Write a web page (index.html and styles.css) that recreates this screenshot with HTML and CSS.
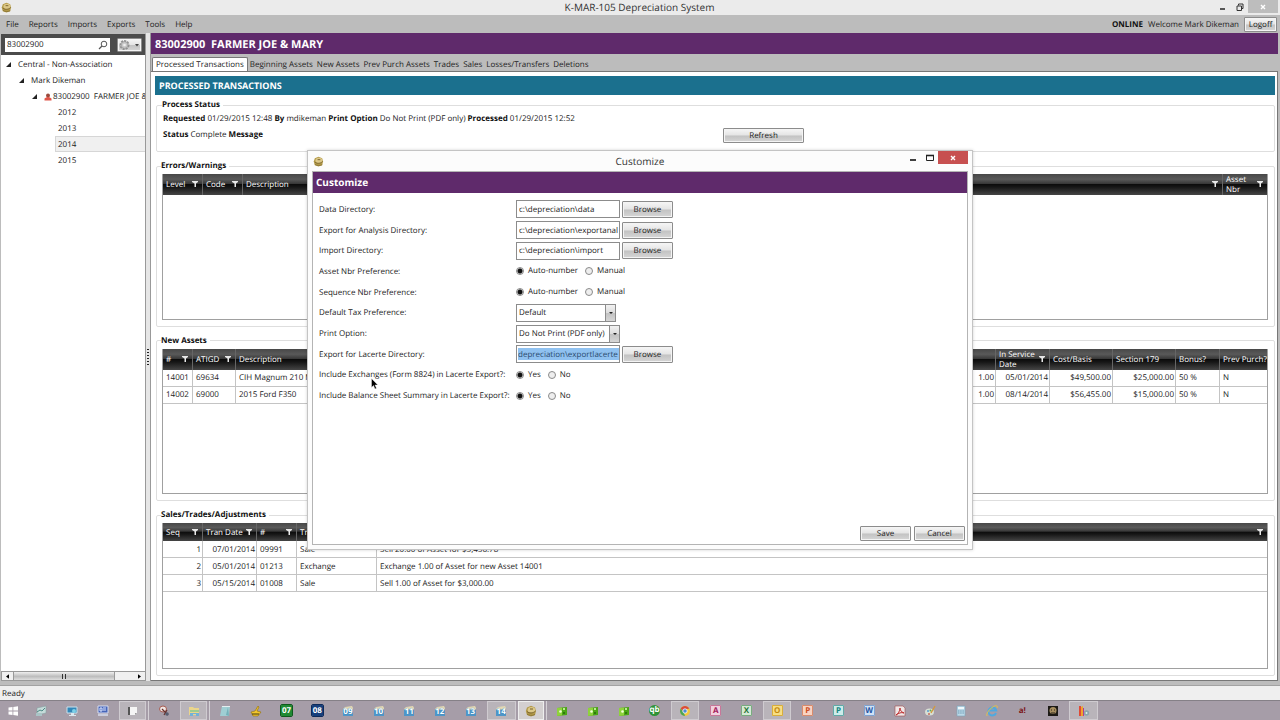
FILE: index.html
```html
<!DOCTYPE html>
<html lang="en">
<head>
<meta charset="utf-8">
<title>K-MAR-105 Depreciation System</title>
<link rel="stylesheet" href="styles.css">
</head>
<body>
<svg class="defs" aria-hidden="true">
  <symbol id="coin" viewBox="0 0 12 12"><path d="M2 2.500 6 .8l4 1.700 1 3.500-1 4-4 1.500-4-1.500L.8 6z" fill="#b39a48"/><ellipse cx="6.500" cy="5" rx="3.800" ry="3" fill="#dcc888"/><path d="M2 6.500c2 2 6 2 8.500-.5M5 4h3" stroke="#76602a" fill="none"/><path d="M2 9c2 1.500 5 2 8 .5" stroke="#8c7638" fill="none"/></symbol>
  <symbol id="funnel" viewBox="0 0 6 6"><path d="M0 0h6v1L4 2.500V6H2.500V2.500L0 1z" fill="#e8e8e8"/></symbol>
  <symbol id="folder" viewBox="0 0 12 12"><path d="M1 4 3 2l7-1 1 2v3H1z" fill="#e3d9b4"/><path d="M1 4.500h10V11H1z" fill="#4f96c8"/></symbol>
  <symbol id="green" viewBox="0 0 12 12"><path d="M1 3l10-1v8l-10 1z" fill="#4ba614"/><path d="M1 3l5-.5v8L1 11z" fill="#8fd23c"/><circle cx="4.500" cy="6.500" r="1.300" fill="#f1ffd8"/><circle cx="8" cy="4" r="1" fill="#e4ffb8"/><circle cx="8" cy="8" r="1" fill="#276b08"/></symbol>
</svg>

<header class="titlebar">
  <svg class="app-icon" viewBox="0 0 12 12"><use href="#coin"/></svg>
  <h1 class="window-title">K-MAR-105 Depreciation System</h1>
  <div class="window-buttons">
    <button class="win-btn" aria-label="Minimize"><svg viewBox="0 0 8 8"><path d="M1 6h5" stroke="#333" stroke-width="1.600"/></svg></button>
    <button class="win-btn" aria-label="Restore"><svg viewBox="0 0 8 8"><path d="M2.500 2.500V1H7v4.500H5.500M1 3h4.500v4.500H1z" stroke="#333" fill="none"/></svg></button>
    <button class="win-btn win-close" aria-label="Close"><svg viewBox="0 0 8 8"><path d="M2 2l4 4M6 2 2 6" stroke="#fff" stroke-width="1.400"/></svg></button>
  </div>
</header>

<nav class="menubar">
  <button class="menu">File</button><button class="menu">Reports</button><button class="menu">Imports</button><button class="menu">Exports</button><button class="menu">Tools</button><button class="menu">Help</button>
  <span class="session"><b>ONLINE</b><span>Welcome Mark Dikeman</span><button class="btn logoff">Logoff</button></span>
</nav>

<main class="workspace">
  <aside class="sidebar">
    <div class="finder">
      <label class="search"><input class="search-input" type="text" value="83002900" aria-label="Search"><svg viewBox="0 0 10 10"><circle cx="6" cy="4" r="2.800" fill="none" stroke="#555"/><path d="M4 6 1 9" stroke="#555" stroke-width="1.300"/></svg></label>
      <button class="btn gear" aria-label="Options"><svg viewBox="0 0 22 12"><circle cx="6.500" cy="6" r="4" fill="#c4c4c4" stroke="#909090" stroke-width="2" stroke-dasharray="2 1"/><circle cx="6.500" cy="6" r="3.300" fill="#c8c8c8" stroke="#999" stroke-width=".6"/><circle cx="6.500" cy="6" r="1.300" fill="#eee"/><path d="M17 5h4l-2 2.500z" fill="#444"/></svg></button>
    </div>
    <ul class="tree">
      <li><span class="node"><i class="caret"></i>Central - Non-Association</span>
        <ul>
          <li><span class="node"><i class="caret"></i>Mark Dikeman</span>
            <ul>
              <li><span class="node"><i class="caret"></i><svg class="person" viewBox="0 0 8 8"><circle cx="4" cy="2.500" r="2" fill="#9b4a3c"/><path d="M.5 7.500V5.500L3 4h2l2.500 1.500v2z" fill="#e0564a"/></svg>83002900&nbsp; FARMER JOE &amp; MARY</span>
                <ul class="years">
                  <li class="node">2012</li><li class="node">2013</li><li class="node selected">2014</li><li class="node">2015</li>
                </ul>
              </li>
            </ul>
          </li>
        </ul>
      </li>
    </ul>
    <div class="scrollbar">
      <button aria-label="Scroll left"><svg viewBox="0 0 4 6"><path d="M4 0v6L0 3z"/></svg></button>
      <div class="thumb"><i></i><i></i></div>
      <button class="end" aria-label="Scroll right"><svg viewBox="0 0 4 6"><path d="M0 0v6l4-3z"/></svg></button>
    </div>
  </aside>
  <div class="splitter"><span class="grip"></span></div>

  <section class="content">
    <h2 class="client">83002900&nbsp; FARMER JOE &amp; MARY</h2>
    <div class="tabs">
      <button class="tab active">Processed Transactions</button><button class="tab">Beginning Assets</button><button class="tab">New Assets</button><button class="tab">Prev Purch Assets</button><button class="tab">Trades</button><button class="tab">Sales</button><button class="tab">Losses/Transfers</button><button class="tab">Deletions</button>
    </div>
    <div class="panel">
      <h3 class="section-title">PROCESSED TRANSACTIONS</h3>

      <fieldset class="group status">
        <legend>Process Status</legend>
        <p><b>Requested</b> 01/29/2015 12:48 <b>By</b> mdikeman <b>Print Option</b> Do Not Print (PDF only) <b>Processed</b> 01/29/2015 12:52</p>
        <div class="status-row"><p><b>Status</b> Complete <b>Message</b></p><button class="btn">Refresh</button></div>
      </fieldset>

      <fieldset class="group fill">
        <legend>Errors/Warnings</legend>
        <div class="grid">
          <table class="tall">
            <colgroup><col class="c40"><col class="c40"><col><col class="c44"></colgroup>
            <thead><tr>
              <th><span>Level<svg><use href="#funnel"/></svg></span></th>
              <th><span>Code<svg><use href="#funnel"/></svg></span></th>
              <th><span>Description<svg><use href="#funnel"/></svg></span></th>
              <th><span>Asset<br>Nbr<svg><use href="#funnel"/></svg></span></th>
            </tr></thead>
          </table>
        </div>
      </fieldset>

      <fieldset class="group fill">
        <legend>New Assets</legend>
        <div class="grid">
          <table class="tall">
            <colgroup><col class="c30"><col class="c43"><col><col class="c80"><col class="c54"><col class="c63"><col class="c63"><col class="c44"><col class="c47"></colgroup>
            <thead><tr>
              <th><span>#<svg><use href="#funnel"/></svg></span></th>
              <th><span>ATIGD<svg><use href="#funnel"/></svg></span></th>
              <th><span>Description</span></th>
              <th><span>Quantity</span></th>
              <th><span>In Service<br>Date<svg><use href="#funnel"/></svg></span></th>
              <th><span>Cost/Basis</span></th>
              <th><span>Section 179</span></th>
              <th><span>Bonus?</span></th>
              <th><span>Prev Purch?</span></th>
            </tr></thead>
            <tbody>
              <tr><td>14001</td><td>69634</td><td>CIH Magnum 210 MFD</td><td class="num">1.00</td><td class="num">05/01/2014</td><td class="num">$49,500.00</td><td class="num">$25,000.00</td><td>50 %</td><td>N</td></tr>
              <tr><td>14002</td><td>69000</td><td>2015 Ford F350</td><td class="num">1.00</td><td class="num">08/14/2014</td><td class="num">$56,455.00</td><td class="num">$15,000.00</td><td>50 %</td><td>N</td></tr>
            </tbody>
          </table>
        </div>
      </fieldset>

      <fieldset class="group fill">
        <legend>Sales/Trades/Adjustments</legend>
        <div class="grid">
          <table>
            <colgroup><col class="c40"><col class="c54"><col class="c40"><col class="c80"><col></colgroup>
            <thead><tr>
              <th><span>Seq<svg><use href="#funnel"/></svg></span></th>
              <th><span>Tran Date<svg><use href="#funnel"/></svg></span></th>
              <th><span>#<svg><use href="#funnel"/></svg></span></th>
              <th><span>Tran Type<svg><use href="#funnel"/></svg></span></th>
              <th><span>Description<svg><use href="#funnel"/></svg></span></th>
            </tr></thead>
            <tbody>
              <tr><td class="num">1</td><td class="num">07/01/2014</td><td>09991</td><td>Sale</td><td>Sell 20.00 of Asset for $3,456.78</td></tr>
              <tr><td class="num">2</td><td class="num">05/01/2014</td><td>01213</td><td>Exchange</td><td>Exchange 1.00 of Asset for new Asset 14001</td></tr>
              <tr><td class="num">3</td><td class="num">05/15/2014</td><td>01008</td><td>Sale</td><td>Sell 1.00 of Asset for $3,000.00</td></tr>
            </tbody>
          </table>
        </div>
      </fieldset>
    </div>
  </section>
</main>

<footer class="statusbar">Ready</footer>

<nav class="taskbar" aria-label="Taskbar">
  <button aria-label="Start"><svg viewBox="0 0 12 12"><path d="M1.500 2.500 5.500 2v3.600h-4zM6.300 1.900 11 1.200v4.400H6.300zM1.500 6.400h4V10l-4-.5zM6.300 6.400H11v4.400l-4.700-.7z" fill="#fff"/></svg></button>
  <button aria-label="Performance"><svg viewBox="0 0 12 12"><path d="M2 3 11 1v7l-9 2z" fill="#c5dbd9" stroke="#7f9c9c" stroke-width=".5"/><path d="M2 7l3-2 2 1 3-3" stroke="#4d8b86" fill="none"/><path d="M1 8h6v3H1z" fill="#aac4c6"/></svg></button>
  <button aria-label="Remote desktop"><svg viewBox="0 0 12 12"><path d="M1 2h10v6H1z" fill="#3387b8" stroke="#c9e0ec"/><path d="M5 8h3v2h2v1H3v-1h2z" fill="#dbe8ee"/><circle cx="8" cy="6" r="2" fill="#7ed0e8"/></svg></button>
  <button aria-label="Computer"><svg viewBox="0 0 12 12"><path d="M1 1h10v7H1z" fill="#4664b8" stroke="#d6dcf0"/><path d="M3 3h2v3H3zM6 3h3M6 5h3" stroke="#dce6ff" fill="none"/><path d="M1 9h10v2H1z" fill="#cbcddc"/></svg></button>
  <button class="open stack" aria-label="Console"><svg viewBox="0 0 12 12"><path d="M2 2h7v8H2z" fill="#555"/><path d="M4 2h7v6l-2 2H4z" fill="#f5f5f5"/><path d="M9 10V8h2z" fill="#999"/></svg></button>
  <button aria-label="Snipping"><svg viewBox="0 0 12 12"><ellipse cx="5" cy="4" rx="3.500" ry="3" fill="#f0e6e4" stroke="#a65a50"/><path d="M4 4l6 6M9 5l-3 5" stroke="#65302c" stroke-width="1.200"/><circle cx="9" cy="9" r="1.800" fill="#555d70"/></svg></button>
  <button class="open stack" aria-label="File Explorer"><svg viewBox="0 0 12 12"><path d="M1 2h4l1 1h5v7H1z" fill="#ead58b"/><path d="M2 5h9v2H2z" fill="#9ecb91"/><path d="M2 8h9v3H8V9H5v2H2z" fill="#72b2d8"/></svg></button>
  <button aria-label="Notepad"><svg viewBox="0 0 12 12"><path d="M3 1h8l-1 10H1z" fill="#9fced3"/><path d="M3 1h8v1H3z" fill="#e4edf0"/><path d="M9 2 7 10l3 1z" fill="#75b1ba"/></svg></button>
  <button aria-label="Notes"><svg viewBox="0 0 12 12"><path d="M1 7l4-1 3-5 1 1-2 4 4 1-3 4H3z" fill="#f3c72c" stroke="#8e6d0c" stroke-width=".6"/><path d="M2 9h7" stroke="#453a10"/></svg></button>
  <button><span class="tile t07">07</span></button>
  <button><span class="tile t08">08</span></button>
  <button><span class="year"><svg viewBox="0 0 12 12"><use href="#folder"/></svg><b>09</b></span></button>
  <button><span class="year"><svg viewBox="0 0 12 12"><use href="#folder"/></svg><b>10</b></span></button>
  <button><span class="year"><svg viewBox="0 0 12 12"><use href="#folder"/></svg><b>11</b></span></button>
  <button><span class="year"><svg viewBox="0 0 12 12"><use href="#folder"/></svg><b>12</b></span></button>
  <button><span class="year"><svg viewBox="0 0 12 12"><use href="#folder"/></svg><b>13</b></span></button>
  <button class="open"><span class="year"><svg viewBox="0 0 12 12"><use href="#folder"/></svg><b>14</b></span></button>
  <button class="open current stack" aria-label="K-MAR-105"><svg viewBox="0 0 12 12"><use href="#coin"/></svg></button>
  <button aria-label="Green 1"><svg viewBox="0 0 12 12"><use href="#green"/></svg></button>
  <button aria-label="Green 2"><svg viewBox="0 0 12 12"><use href="#green"/></svg></button>
  <button aria-label="Green 3"><svg viewBox="0 0 12 12"><use href="#green"/></svg></button>
  <button><span class="tile qb">qb</span></button>
  <button class="open" aria-label="Chrome"><svg viewBox="0 0 12 12"><circle cx="6" cy="6" r="5" fill="#f2c83b"/><path d="M1.700 3.500a5 5 0 0 1 8.600 0L6 4.500 4.500 7z" fill="#d94b3d"/><path d="M1.700 3.500 5 8l1 3A5 5 0 0 1 1.700 3.500z" fill="#4aa357"/><circle cx="6" cy="6" r="2.200" fill="#4c8bd6" stroke="#fff" stroke-width=".8"/></svg></button>
  <button><span class="tile access">A</span></button>
  <button><span class="tile excel">X</span></button>
  <button class="open"><span class="tile outlook">O</span></button>
  <button><span class="tile ppt">P</span></button>
  <button><span class="tile pub">P</span></button>
  <button><span class="tile word">W</span></button>
  <button aria-label="PDF reader"><svg viewBox="0 0 12 12"><path d="M1 1h8l2 2v8H1z" fill="#efe7e7" stroke="#a34f4f" stroke-width=".6"/><path d="M2 10c2-1 4-4 4-7 0 3 2 4 4 5-3-1-5 0-8 2z" fill="none" stroke="#bf2f2f"/></svg></button>
  <button aria-label="Paint"><svg viewBox="0 0 12 12"><ellipse cx="5.500" cy="7" rx="4.500" ry="3.500" fill="#d8dfd4"/><circle cx="4" cy="6" r="1" fill="#5c9fd0"/><circle cx="6.500" cy="5.500" r="1" fill="#5fae55"/><circle cx="5" cy="9" r="1" fill="#c96a58"/><path d="M7 8l4-7" stroke="#d69a37" stroke-width="1.300"/></svg></button>
  <button aria-label="Calculator"><svg viewBox="0 0 12 12"><path d="M2 1h8v10H2z" fill="#bcd9e8" stroke="#7ca5bb" stroke-width=".6"/><path d="M3 2h6v2H3z" fill="#eff8fc"/><path d="M3 6h6M3 8h6" stroke="#6a9ab4" stroke-dasharray="1.500 .7"/></svg></button>
  <button aria-label="Internet Explorer"><svg viewBox="0 0 12 12"><path d="M10 8a4 4 0 1 1 .2-2.500H4" fill="none" stroke="#4fa9df" stroke-width="2"/><path d="M1 11C-1 8 8-1 11 1c.7.500.4 1.500 0 2" fill="none" stroke="#e0c04c"/></svg></button>
  <button><span class="tile red">a!</span></button>
  <button aria-label="Game"><svg viewBox="0 0 12 12"><path d="M1 1h10v10H1z" fill="#1d1a16"/><circle cx="6" cy="5.500" r="3.500" fill="#a68d5f"/><path d="M4 5h1M7 5h1M4 8h4" stroke="#2a2218"/></svg></button>
  <button class="open" aria-label="Recorder"><svg viewBox="0 0 12 12"><path d="M1 1h2v10H1z" fill="#e04a35"/><path d="M3 2l2-1v10H3z" fill="#f0a52e"/><path d="M5 3h1v8H5z" fill="#b13a93"/><circle cx="8.500" cy="8" r="2.700" fill="#8ba5ab"/><circle cx="8.500" cy="8" r="1" fill="#e3eef0"/></svg></button>
</nav>

<section class="dialog" role="dialog" aria-labelledby="dialog-title">
  <header class="dialog-bar">
    <svg class="app-icon" viewBox="0 0 12 12"><use href="#coin"/></svg>
    <h2 id="dialog-title" class="window-title">Customize</h2>
    <div class="window-buttons">
      <button class="win-btn" aria-label="Minimize dialog"><svg viewBox="0 0 8 8"><path d="M1 6h6" stroke="#111" stroke-width="1.600"/></svg></button>
      <button class="win-btn" aria-label="Maximize dialog"><svg viewBox="0 0 8 8"><path d="M.5 1.500h7v5h-7z" stroke="#222" fill="none"/><path d="M0 1.500h8" stroke="#222" stroke-width="1.600"/></svg></button>
      <button class="win-btn win-close" aria-label="Close dialog"><svg viewBox="0 0 8 8"><path d="M2 2l4 4M6 2 2 6" stroke="#fff" stroke-width="1.400"/></svg></button>
    </div>
  </header>
  <form class="dialog-body">
    <h3 class="dialog-heading">Customize</h3>
    <div class="fields">
      <label for="data">Data Directory:</label>
      <div class="field"><input class="box" id="data" type="text" value="c:\depreciation\data"><button class="btn browse" type="button">Browse</button></div>
      <label for="analysis">Export for Analysis Directory:</label>
      <div class="field"><input class="box" id="analysis" type="text" value="c:\depreciation\exportanal"><button class="btn browse" type="button">Browse</button></div>
      <label for="import">Import Directory:</label>
      <div class="field"><input class="box" id="import" type="text" value="c:\depreciation\import"><button class="btn browse" type="button">Browse</button></div>
      <span>Asset Nbr Preference:</span>
      <div class="field radios"><label><input type="radio" name="asset" checked>Auto-number</label><label><input type="radio" name="asset">Manual</label></div>
      <span>Sequence Nbr Preference:</span>
      <div class="field radios"><label><input type="radio" name="seq" checked>Auto-number</label><label><input type="radio" name="seq">Manual</label></div>
      <label for="tax">Default Tax Preference:</label>
      <div class="field"><span class="pick"><select class="box" id="tax"><option>Default</option></select></span></div>
      <label for="print">Print Option:</label>
      <div class="field"><span class="pick wide"><select class="box" id="print"><option>Do Not Print (PDF only)</option></select></span></div>
      <label for="lacerte">Export for Lacerte Directory:</label>
      <div class="field"><input class="box marked" id="lacerte" type="text" value="depreciation\exportlacerte"><button class="btn browse" type="button">Browse</button></div>
      <span>Include Exchanges (Form 8824) in Lacerte Export?:</span>
      <div class="field radios"><label><input type="radio" name="exch" checked>Yes</label><label><input type="radio" name="exch">No</label></div>
      <span>Include Balance Sheet Summary in Lacerte Export?:</span>
      <div class="field radios"><label><input type="radio" name="bal" checked>Yes</label><label><input type="radio" name="bal">No</label></div>
    </div>
    <div class="actions"><button class="btn browse" type="button">Save</button><button class="btn browse" type="button">Cancel</button></div>
  </form>
  <svg class="pointer" viewBox="0 0 8 12"><path d="M.5.500v9l2-2 1.500 3.500 1.500-.7L4 7h2.800z" fill="#000" stroke="#fff" stroke-width=".4"/></svg>
</section>
</body>
</html>
```
FILE: styles.css
```css
* { box-sizing: border-box; }
body {
  margin: 0;
  height: 100vh;
  display: flex;
  flex-direction: column;
  overflow: hidden;
  background: #bcbcbc;
  color: #222;
  font: 8px/12px "Open Sans", "Noto Sans", sans-serif;
  text-rendering: geometricPrecision;
}
h1, h2, h3, p, ul { margin: 0; padding: 0; }
ul { list-style: none; }
button, input, select { font: inherit; color: inherit; margin: 0; text-rendering: inherit; }
button { border: 0; padding: 0; background: none; white-space: nowrap; }
svg { display: block; flex: none; }
.defs { position: absolute; width: 0; height: 0; }

.btn {
  padding-top: 1px;
  border: 1px solid #8c8c8c;
  border-radius: 1px;
  background: linear-gradient(#f6f6f6, #e4e4e4 48%, #c2c2c2 52%, #d6d6d6);
  box-shadow: inset 0 0 0 1px #f4f4f4;
  line-height: 12px;
}

/* Window chrome */
.titlebar, .dialog-bar {
  display: grid;
  grid-template-columns: 1fr auto 1fr;
  align-items: center;
  height: 15px;
  padding: 0 2px 0 1px;
  background: #ebebeb;
}
.app-icon { width: 11px; height: 11px; }
.window-title { font-size: 10px; font-weight: 400; line-height: 15px; color: #333; }
.window-buttons { display: flex; justify-content: flex-end; align-self: start; }
.win-btn { width: 17px; height: 13px; display: grid; place-items: center; }
.win-btn svg { width: 8px; height: 8px; }
.win-close { width: 30px; height: 13px; background: #bdbdbd; }

.menubar { display: flex; align-items: center; gap: 10px; height: 18px; padding: 1px 3px 0 6px; background: #bcbcbc; }
.session { display: flex; align-items: center; gap: 5px; margin-left: auto; }
.session b { color: #111; }
.logoff { width: 33px; height: 15px; }

/* Sidebar */
.workspace { flex: 1; min-height: 0; display: flex; padding: 0 2px 0 1px; }
.sidebar { width: 145px; flex: none; display: flex; flex-direction: column; background: #fff; overflow: hidden; margin-top: 1px; border-right: 1px solid #999; }
.finder { display: flex; align-items: center; gap: 7px; height: 21px; padding: 0 3px 0 4px; background: #4b4b4b; }
.search { display: flex; align-items: center; flex: 1; min-width: 0; height: 14px; padding-right: 2px; background: #fff; }
.search-input { flex: 1; width: 0; min-width: 0; border: 0; padding: 0 2px; background: none; outline: 0; line-height: 12px; }
.search svg { width: 10px; height: 10px; }
.gear { flex: none; width: 25px; height: 14px; padding: 0; }
.gear svg { width: 22px; height: 12px; }
.tree { flex: 1; padding-top: 1px; white-space: nowrap; overflow: hidden; }
.tree ul { padding-left: 13px; }
.node { display: flex; align-items: center; height: 16px; padding: 1px 0 0 5px; }
.caret { flex: none; width: 5px; height: 5px; margin-right: 7px; background: #222; clip-path: polygon(100% 0, 100% 100%, 0 100%); }
.person { width: 8px; height: 8px; margin-right: 1px; }
.tree .years { padding-left: 28px; }
.years .node { padding-left: 2px; border: 1px solid transparent; border-right: 0; }
.years .selected { background: #f0f0f0; border-color: #d6d6d6; }
.scrollbar { display: flex; height: 10px; background: #f0f0f0; border: 1px solid #999; border-right: 0; }
.scrollbar button { width: 11px; display: grid; place-items: center; }
.scrollbar svg { width: 3px; height: 5px; }
.scrollbar .end { margin-left: auto; }
.thumb { display: flex; justify-content: center; align-items: center; gap: 2px; width: 102px; border: 1px solid #999; border-width: 0 1px; background: linear-gradient(#efefef, #bdbdbd 55%, #dedede); }
.thumb i { width: 1px; height: 5px; background: #333; }
.splitter { width: 5px; flex: none; display: flex; align-items: center; justify-content: center; background: #e6e6e6; border-right: 1px solid #999; }
.grip { width: 2px; height: 17px; background: repeating-linear-gradient(#222 0 1px, transparent 1px 3px); }

/* Content */
.content { flex: 1; min-width: 0; display: flex; flex-direction: column; }
.client { height: 21px; padding-left: 4px; background: #5f2a6b; color: #fff; font-size: 11px; line-height: 23px; }
.tabs { display: flex; align-items: flex-end; height: 18px; padding-left: 1px; border-bottom: 1px solid #777; }
.tab { height: 13px; padding: 1px 2px 0; }
.tab.active { height: 14px; padding: 1px 3px 0; border: 1px solid #777; border-bottom: 0; border-radius: 2px 2px 0 0; background: #fff; }
.panel { flex: 1; min-height: 0; display: flex; flex-direction: column; gap: 8px; padding: 4px 2px 4px 4px; background: #fff; border-right: 1px solid #777; border-bottom: 1px solid #777; }
.section-title { height: 19px; flex: none; margin-bottom: -4px; padding-left: 4px; background: #1b708e; color: #fff; font-size: 9px; line-height: 19px; }
.group { min-width: 0; margin: 0 0 0 1px; padding: 2px 6px 6px 5px; border: 1px solid #dedede; border-radius: 2px; }
.group legend { padding: 0 3px 0 0; margin-left: -1px; font-weight: 700; color: #111; }
.group b { color: #111; }
.status { padding: 0 6px 8px 6px; flex: none; }
.status p { line-height: 16px; }
.status-row { display: grid; grid-template-columns: 560px 81px; align-items: center; height: 16px; }
.status-row .btn { height: 15px; }
.fill { flex: 1 1 0; min-height: 0; }
.grid { height: 100%; border: 1px solid #a0a0a0; border-top: 0; overflow: hidden; }

table { width: 100%; table-layout: fixed; border-collapse: separate; border-spacing: 0; }
.c30 { width: 30px; } .c40 { width: 40px; } .c43 { width: 43px; } .c44 { width: 44px; }
.c47 { width: 47px; } .c54 { width: 54px; } .c63 { width: 63px; } .c80 { width: 80px; }
thead tr { background: linear-gradient(#484848, #595959 25%, #383838 46%, #0c0c0c 50%, #161616 62%, #454545); }
th { height: 18px; padding: 1px 0 0; color: #fff; font-weight: 400; text-align: left; border-right: 1px solid #666; }
.tall th { height: 21px; line-height: 10px; }
th span { position: relative; display: block; padding-left: 3px; white-space: nowrap; }
th svg { position: absolute; right: 4px; top: calc(50% - 4px); width: 6px; height: 6px; }
td { height: 17px; padding: 1px 1px 0 3px; border-right: 1px solid #c4c4c4; border-bottom: 1px solid #c4c4c4; white-space: nowrap; overflow: hidden; }
th:last-child, td:last-child { border-right: 0; }
.num { text-align: right; }

.statusbar { height: 14px; margin-top: 5px; padding-left: 2px; background: #efefef; line-height: 15px; outline: 1px solid #a2a2a2; }

/* Taskbar */
.taskbar { display: grid; grid-template-columns: 26px repeat(35, 1fr); height: 20px; padding-right: 181px; background: #a69da8; border-top: 1px solid #858087; }
.taskbar button { display: grid; place-items: center; min-width: 0; }
.taskbar svg { width: 12px; height: 12px; }
.taskbar .open { margin: 0 1px; background: #b9b4ba; border: 1px solid #cfcbd0; }
.taskbar .current { background: #d3cfd0; border-color: #eee; }
.taskbar .stack { margin-right: 3px; box-shadow: 2px 0 0 #a69da8, 3px 0 0 #d5d1d6; }
.tile { width: 11px; height: 11px; font-size: 8px; font-weight: 700; line-height: 11px; text-align: center; border-radius: 1px; }
.t07 { background: #1f8a34; color: #fff; outline: 1px solid #0d5a1c; }
.t08 { background: #173f7c; color: #fff; outline: 1px solid #0d2a5a; }
.qb { border-radius: 50%; background: #2e9336; color: #fff; line-height: 10px; }
.access { background: #f1d0de; color: #a4195a; box-shadow: inset 0 0 0 1px #c77799; }
.excel { background: #d5ead5; color: #27733a; box-shadow: inset 0 0 0 1px #79ab80; }
.outlook { background: #f7de84; color: #c48a10; box-shadow: inset 0 0 0 1px #d8ae3c; }
.ppt { background: #f8d3c2; color: #cc4c1f; box-shadow: inset 0 0 0 1px #d98b6c; }
.pub { background: #cdecea; color: #148480; box-shadow: inset 0 0 0 1px #61aaa7; }
.word { background: #d0e2f6; color: #1f55a3; box-shadow: inset 0 0 0 1px #7fa3d0; }
.red { color: #7c1518; }
.year { display: grid; place-items: center; }
.year svg, .year b { grid-area: 1 / 1; }
.year b { color: #fff; line-height: 12px; padding-top: 2px; text-shadow: 0 0 1px #1d6da3; }

/* Dialog */
.dialog {
  position: absolute;
  left: 307px;
  top: 150px;
  width: 666px;
  height: 400px;
  display: flex;
  flex-direction: column;
  padding: 0 4px 4px;
  background: #fcfcfc;
  border: 1px solid #c4c4c4;
  box-shadow: 0 0 3px rgba(0, 0, 0, .18);
}
.dialog-bar { height: 20px; padding: 0; background: none; }
.dialog-bar .app-icon { margin-left: 1px; }
.dialog-bar .win-close { background: #c75050; }
.dialog-body { flex: 1; display: flex; flex-direction: column; background: #fff; border: 1px solid #b4b4b4; }
.dialog-heading { height: 21px; padding-left: 3px; background: #5f2a6b; color: #fff; font-size: 10px; line-height: 21px; }
.fields { display: grid; grid-template-columns: 197px 1fr; grid-auto-rows: 1fr; align-items: center; height: 207px; margin-top: 6px; padding-left: 6px; }
.fields > label, .fields > span { padding-top: 1px; }
.field { display: flex; align-items: center; gap: 2px; }
.box { width: 104px; height: 18px; padding: 0 0 0 2px; border: 1px solid #8c8c8c; border-radius: 0; background: #fff; outline: 0; line-height: 12px; }
.marked { padding: 2px 0 2px 1px; color: #2a4a6e; background: linear-gradient(#8fc1f0, #8fc1f0) content-box; }
.browse { width: 51px; height: 17px; }
.field.radios { gap: 7px; }
.radios label { display: flex; align-items: center; gap: 4px; }
.radios input { appearance: none; width: 8px; height: 8px; border: 1px solid #8a8a8a; border-radius: 50%; background: #eee; }
.radios input:checked { background: radial-gradient(#111 0 2px, #ddd 3px); }
.pick { position: relative; display: flex; width: 100px; }
.pick.wide { width: 104px; }
.pick .box { appearance: none; width: 100%; }
.pick::before { content: ""; position: absolute; right: 1px; top: 1px; bottom: 1px; width: 9px; border-left: 1px solid #8c8c8c; background: linear-gradient(#f2f2f2, #ddd 48%, #c2c2c2 52%, #d6d6d6); pointer-events: none; }
.pick::after { content: ""; position: absolute; right: 3px; top: 8px; border: 2px solid transparent; border-top-color: #222; pointer-events: none; }
.actions { display: flex; justify-content: flex-end; gap: 3px; margin-top: auto; padding: 0 2px 3px; }
.actions .btn { height: 15px; }
.pointer { position: absolute; left: 63px; top: 227px; width: 8px; height: 12px; }
```
